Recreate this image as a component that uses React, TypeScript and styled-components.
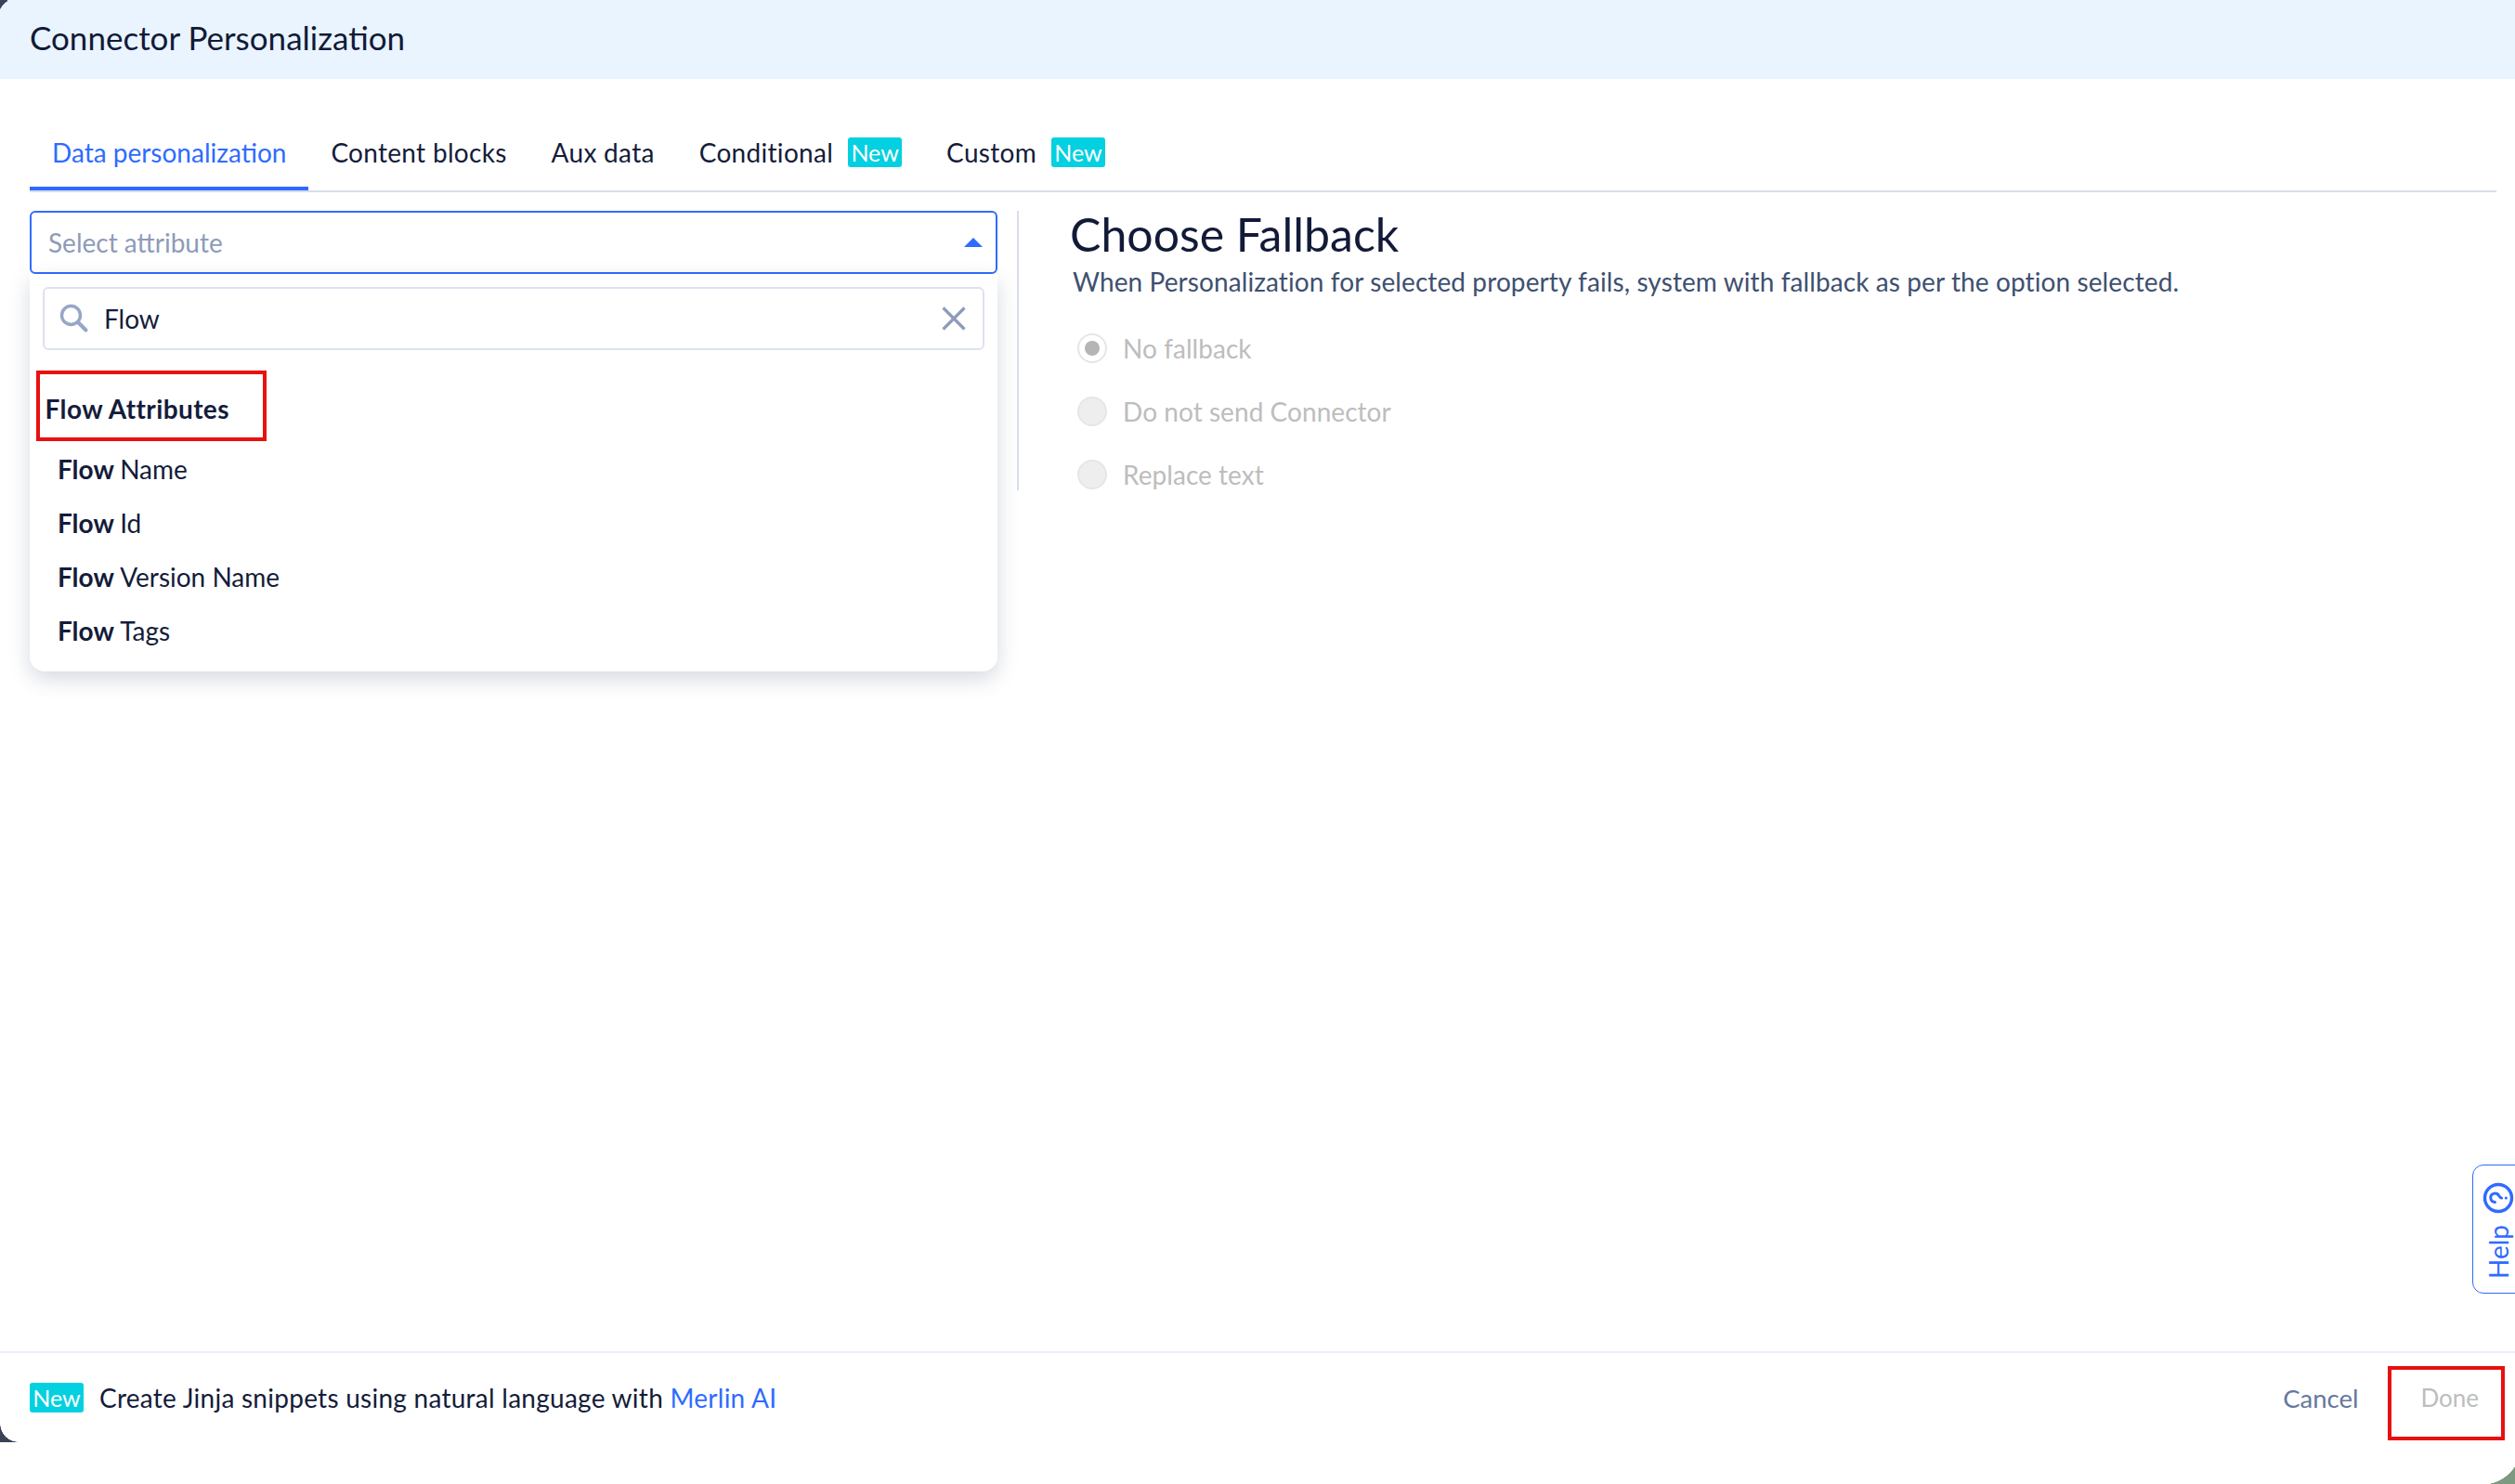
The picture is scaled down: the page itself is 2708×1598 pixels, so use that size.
import React from 'react';
import styled, { createGlobalStyle } from 'styled-components';

const GlobalStyle = createGlobalStyle`
  html, body {
    margin: 0;
    padding: 0;
    background: #fff;
  }
  * {
    box-sizing: border-box;
  }
`;

const Page = styled.div`
  position: relative;
  width: 2708px;
  height: 1598px;
  overflow: hidden;
  display: flex;
  flex-direction: column;
  background: #fff;
  font-family: Lato, "Noto Sans", sans-serif;
  color: #141c3a;
`;

const Header = styled.header`
  height: 85px;
  flex: none;
  display: flex;
  align-items: center;
  padding: 0 32px 5px;
  background: #e9f4ff;
  font-size: 35px;
  color: #121a38;
`;

const Body = styled.main`
  flex: 1;
  min-height: 0;
  display: flex;
  flex-direction: column;
  padding: 56px 20px 0 32px;
`;

const Tabs = styled.nav`
  height: 66px;
  flex: none;
  display: flex;
  border-bottom: 2px solid #d8ddee;
`;

const Tab = styled.div<{ $active?: boolean }>`
  height: 64px;
  display: flex;
  align-items: center;
  gap: 16px;
  padding: 0 24px 15px;
  font-size: 28px;
  letter-spacing: ${p => (p.$active ? '0' : '0.3px')};
  color: ${p => (p.$active ? '#2f6bff' : '#141c3a')};
  border-bottom: 4px solid ${p => (p.$active ? '#2f6bff' : 'transparent')};
`;

const NewBadge = styled.span`
  display: inline-flex;
  align-items: center;
  justify-content: center;
  width: 58px;
  height: 32px;
  border-radius: 3px;
  background: #03d0e0;
  color: #fff;
  font-size: 25px;
  letter-spacing: 0;
`;

const Columns = styled.div`
  flex: 1;
  display: flex;
  align-items: flex-start;
  padding-top: 20px;
`;

const LeftColumn = styled.section`
  position: relative;
  width: 1042px;
  flex: none;
`;

const SelectBox = styled.div`
  height: 68px;
  display: flex;
  align-items: center;
  justify-content: space-between;
  padding: 0 14px 1px 18px;
  border: 2px solid #2f6bff;
  border-radius: 6px;
  font-size: 28px;
  color: #8e9bb8;
`;

const Caret = styled.span`
  width: 0;
  height: 0;
  border-left: 10px solid transparent;
  border-right: 10px solid transparent;
  border-bottom: 10px solid #2f6bff;
`;

const Dropdown = styled.div`
  position: absolute;
  top: 68px;
  left: 0;
  width: 100%;
  height: 428px;
  padding: 14px 14px 0;
  background: #fff;
  border-radius: 0 0 16px 16px;
  box-shadow: 0 8px 22px rgba(70, 84, 120, 0.22);
`;

const SearchBox = styled.div`
  height: 68px;
  display: flex;
  align-items: center;
  padding: 0 18px 0 16px;
  border: 2px solid #dde2f0;
  border-radius: 6px;
  font-size: 28px;
  color: #141c3a;
`;

const SearchValue = styled.span`
  flex: 1;
  margin-left: 16px;
`;

const GroupTitle = styled.div`
  height: 34px;
  margin: 46px 0 0 2.5px;
  display: flex;
  align-items: center;
  font-size: 28px;
  font-weight: 700;
  letter-spacing: 0.4px;
  color: #141c3a;
`;

const OptionList = styled.ul`
  list-style: none;
  margin: 19px 0 0;
  padding: 0 0 0 16px;
`;

const Option = styled.li`
  height: 58px;
  display: flex;
  align-items: center;
  font-size: 28px;
  color: #141c3a;

  b {
    font-weight: 700;
    white-space: pre;
  }
`;

const RightColumn = styled.section`
  flex: 1;
  min-height: 301px;
  margin-left: 21px;
  padding-left: 55px;
  border-left: 2px solid #d8ddee;
`;

const Heading = styled.h2`
  margin: 0;
  height: 50px;
  display: flex;
  align-items: center;
  font-size: 50px;
  font-weight: 400;
  color: #121a38;
`;

const Description = styled.p`
  margin: 8px 0 0 3px;
  font-size: 28px;
  line-height: 36px;
  letter-spacing: 0.1px;
  color: #3e5070;
`;

const RadioGroup = styled.div`
  margin: 38px 0 0 8px;
  display: flex;
  flex-direction: column;
  gap: 36px;
`;

const RadioRow = styled.label`
  height: 32px;
  display: flex;
  align-items: center;
  gap: 17px;
  font-size: 28px;
  letter-spacing: 0.05px;
  color: #bdbdbd;
`;

const RadioCircle = styled.span<{ $checked?: boolean }>`
  width: 32px;
  height: 32px;
  flex: none;
  display: flex;
  align-items: center;
  justify-content: center;
  border-radius: 50%;
  border: 2px solid #e6e6e6;
  background: ${p => (p.$checked ? '#fff' : '#eeeeee')};

  &::after {
    content: '';
    display: ${p => (p.$checked ? 'block' : 'none')};
    width: 16px;
    height: 16px;
    border-radius: 50%;
    background: #b5b5b5;
  }
`;

const Footer = styled.footer`
  height: 98px;
  flex: none;
  display: flex;
  align-items: center;
  justify-content: space-between;
  padding: 0 39px 0 32px;
  border-top: 2px solid #eaeefc;
  font-size: 28px;
`;

const Promo = styled.div`
  display: flex;
  align-items: center;
  gap: 17px;
  color: #141c3a;
  letter-spacing: 0.26px;
`;

const Link = styled.a`
  color: #2f6bff;
`;

const FooterActions = styled.div`
  display: flex;
  align-items: center;
  gap: 67px;
`;

const CancelButton = styled.span`
  font-size: 27.5px;
  color: #66789c;
`;

const DoneButton = styled.span`
  font-size: 26px;
  color: #bdbdbd;
`;

const Outro = styled.div`
  height: 45px;
  flex: none;
`;

const Annotation = styled.div<{ $x: number; $y: number; $w: number; $h: number }>`
  position: absolute;
  left: ${p => p.$x}px;
  top: ${p => p.$y}px;
  width: ${p => p.$w}px;
  height: ${p => p.$h}px;
  border: 4px solid #e81010;
  pointer-events: none;
`;

const HelpTab = styled.div`
  position: absolute;
  top: 1254px;
  right: -2px;
  width: 48px;
  height: 139px;
  display: flex;
  flex-direction: column;
  align-items: center;
  gap: 12px;
  padding: 18px 0 0 8px;
  border: 1.5px solid #2f6bff;
  border-radius: 12px 0 0 12px;
  background: #fff;
  color: #2f6bff;
`;

const HelpLabel = styled.span`
  writing-mode: vertical-rl;
  transform: rotate(180deg);
  font-size: 28px;
  line-height: 30px;
`;

const HelpIcon = styled.svg`
  width: 34px;
  height: 34px;
  flex: none;
`;

const WindowCorner = styled.div<{ $side: 'tl' | 'bl' | 'br' }>`
  position: absolute;
  ${p => p.$side === 'tl' && `
    top: 0; left: 0;
    width: 8px; height: 13px;
    background: radial-gradient(circle 22.5px at 20px 20px, transparent 22px, #3b4258 22.5px);
  `}
  ${p => p.$side === 'bl' && `
    top: 1533px; left: 0;
    width: 20px; height: 20px;
    background: radial-gradient(circle 20px at 20px 0, transparent 19.5px, #3b4258 20px);
  `}
  ${p => p.$side === 'br' && `
    top: 1556px; left: 2672px;
    width: 36px; height: 42px;
    background: radial-gradient(circle 43px at 0 0, transparent 42.5px, #7d9a80 43px);
  `}
`;

const SearchIcon = () => (
  <svg width="32" height="32" viewBox="0 0 32 32" fill="none" stroke="#97a6c6">
    <circle cx="12.5" cy="12.5" r="10" strokeWidth="3.4" />
    <path d="M20.5 20.5l8 8" strokeWidth="4" strokeLinecap="round" />
  </svg>
);

const CloseIcon = () => (
  <svg width="26" height="26" viewBox="0 0 26 26" fill="none" stroke="#8e9bb8" strokeWidth="3.2">
    <path d="M1.500 1.500l23 23M24.500 1.500l-23 23" />
  </svg>
);

const fallbackOptions = [
  { label: 'No fallback', checked: true },
  { label: 'Do not send Connector' },
  { label: 'Replace text' },
];

const flowOptions = ['Name', 'Id', 'Version Name', 'Tags'];

const App = () => (
  <Page>
    <GlobalStyle />
    <Header>Connector Personalization</Header>
    <Body>
      <Tabs>
        <Tab $active>Data personalization</Tab>
        <Tab>Content blocks</Tab>
        <Tab>Aux data</Tab>
        <Tab>
          Conditional
          <NewBadge>New</NewBadge>
        </Tab>
        <Tab>
          Custom
          <NewBadge>New</NewBadge>
        </Tab>
      </Tabs>
      <Columns>
        <LeftColumn>
          <SelectBox>
            Select attribute
            <Caret />
          </SelectBox>
          <Dropdown>
            <SearchBox>
              <SearchIcon />
              <SearchValue>Flow</SearchValue>
              <CloseIcon />
            </SearchBox>
            <GroupTitle>Flow Attributes</GroupTitle>
            <OptionList>
              {flowOptions.map(name => (
                <Option key={name}>
                  <b>Flow </b>
                  {name}
                </Option>
              ))}
            </OptionList>
          </Dropdown>
        </LeftColumn>
        <RightColumn>
          <Heading>Choose Fallback</Heading>
          <Description>
            When Personalization for selected property fails, system with fallback as per the option selected.
          </Description>
          <RadioGroup>
            {fallbackOptions.map(opt => (
              <RadioRow key={opt.label}>
                <RadioCircle $checked={opt.checked} />
                {opt.label}
              </RadioRow>
            ))}
          </RadioGroup>
        </RightColumn>
      </Columns>
    </Body>
    <Footer>
      <Promo>
        <NewBadge>New</NewBadge>
        <span>
          Create Jinja snippets using natural language with <Link>Merlin AI</Link>
        </span>
      </Promo>
      <FooterActions>
        <CancelButton>Cancel</CancelButton>
        <DoneButton>Done</DoneButton>
      </FooterActions>
    </Footer>
    <Outro />
    <HelpTab>
      <HelpIcon viewBox="0 0 34 34" fill="none" stroke="currentColor">
        <circle cx="17" cy="17" r="14.500" strokeWidth="3.4" />
        <g transform="rotate(-90 17 17)" strokeWidth="3" strokeLinecap="round">
          <path d="M12.500 13.500a4.700 4.700 0 1 1 7 4.100c-1.500.9-2.500 1.600-2.500 3" />
          <path d="M17 25.300v.1" />
        </g>
      </HelpIcon>
      <HelpLabel>Help</HelpLabel>
    </HelpTab>
    <Annotation $x={39} $y={399} $w={248} $h={76} />
    <Annotation $x={2571} $y={1471} $w={126} $h={80} />
    <WindowCorner $side="tl" />
    <WindowCorner $side="bl" />
    <WindowCorner $side="br" />
  </Page>
);

export default App;
